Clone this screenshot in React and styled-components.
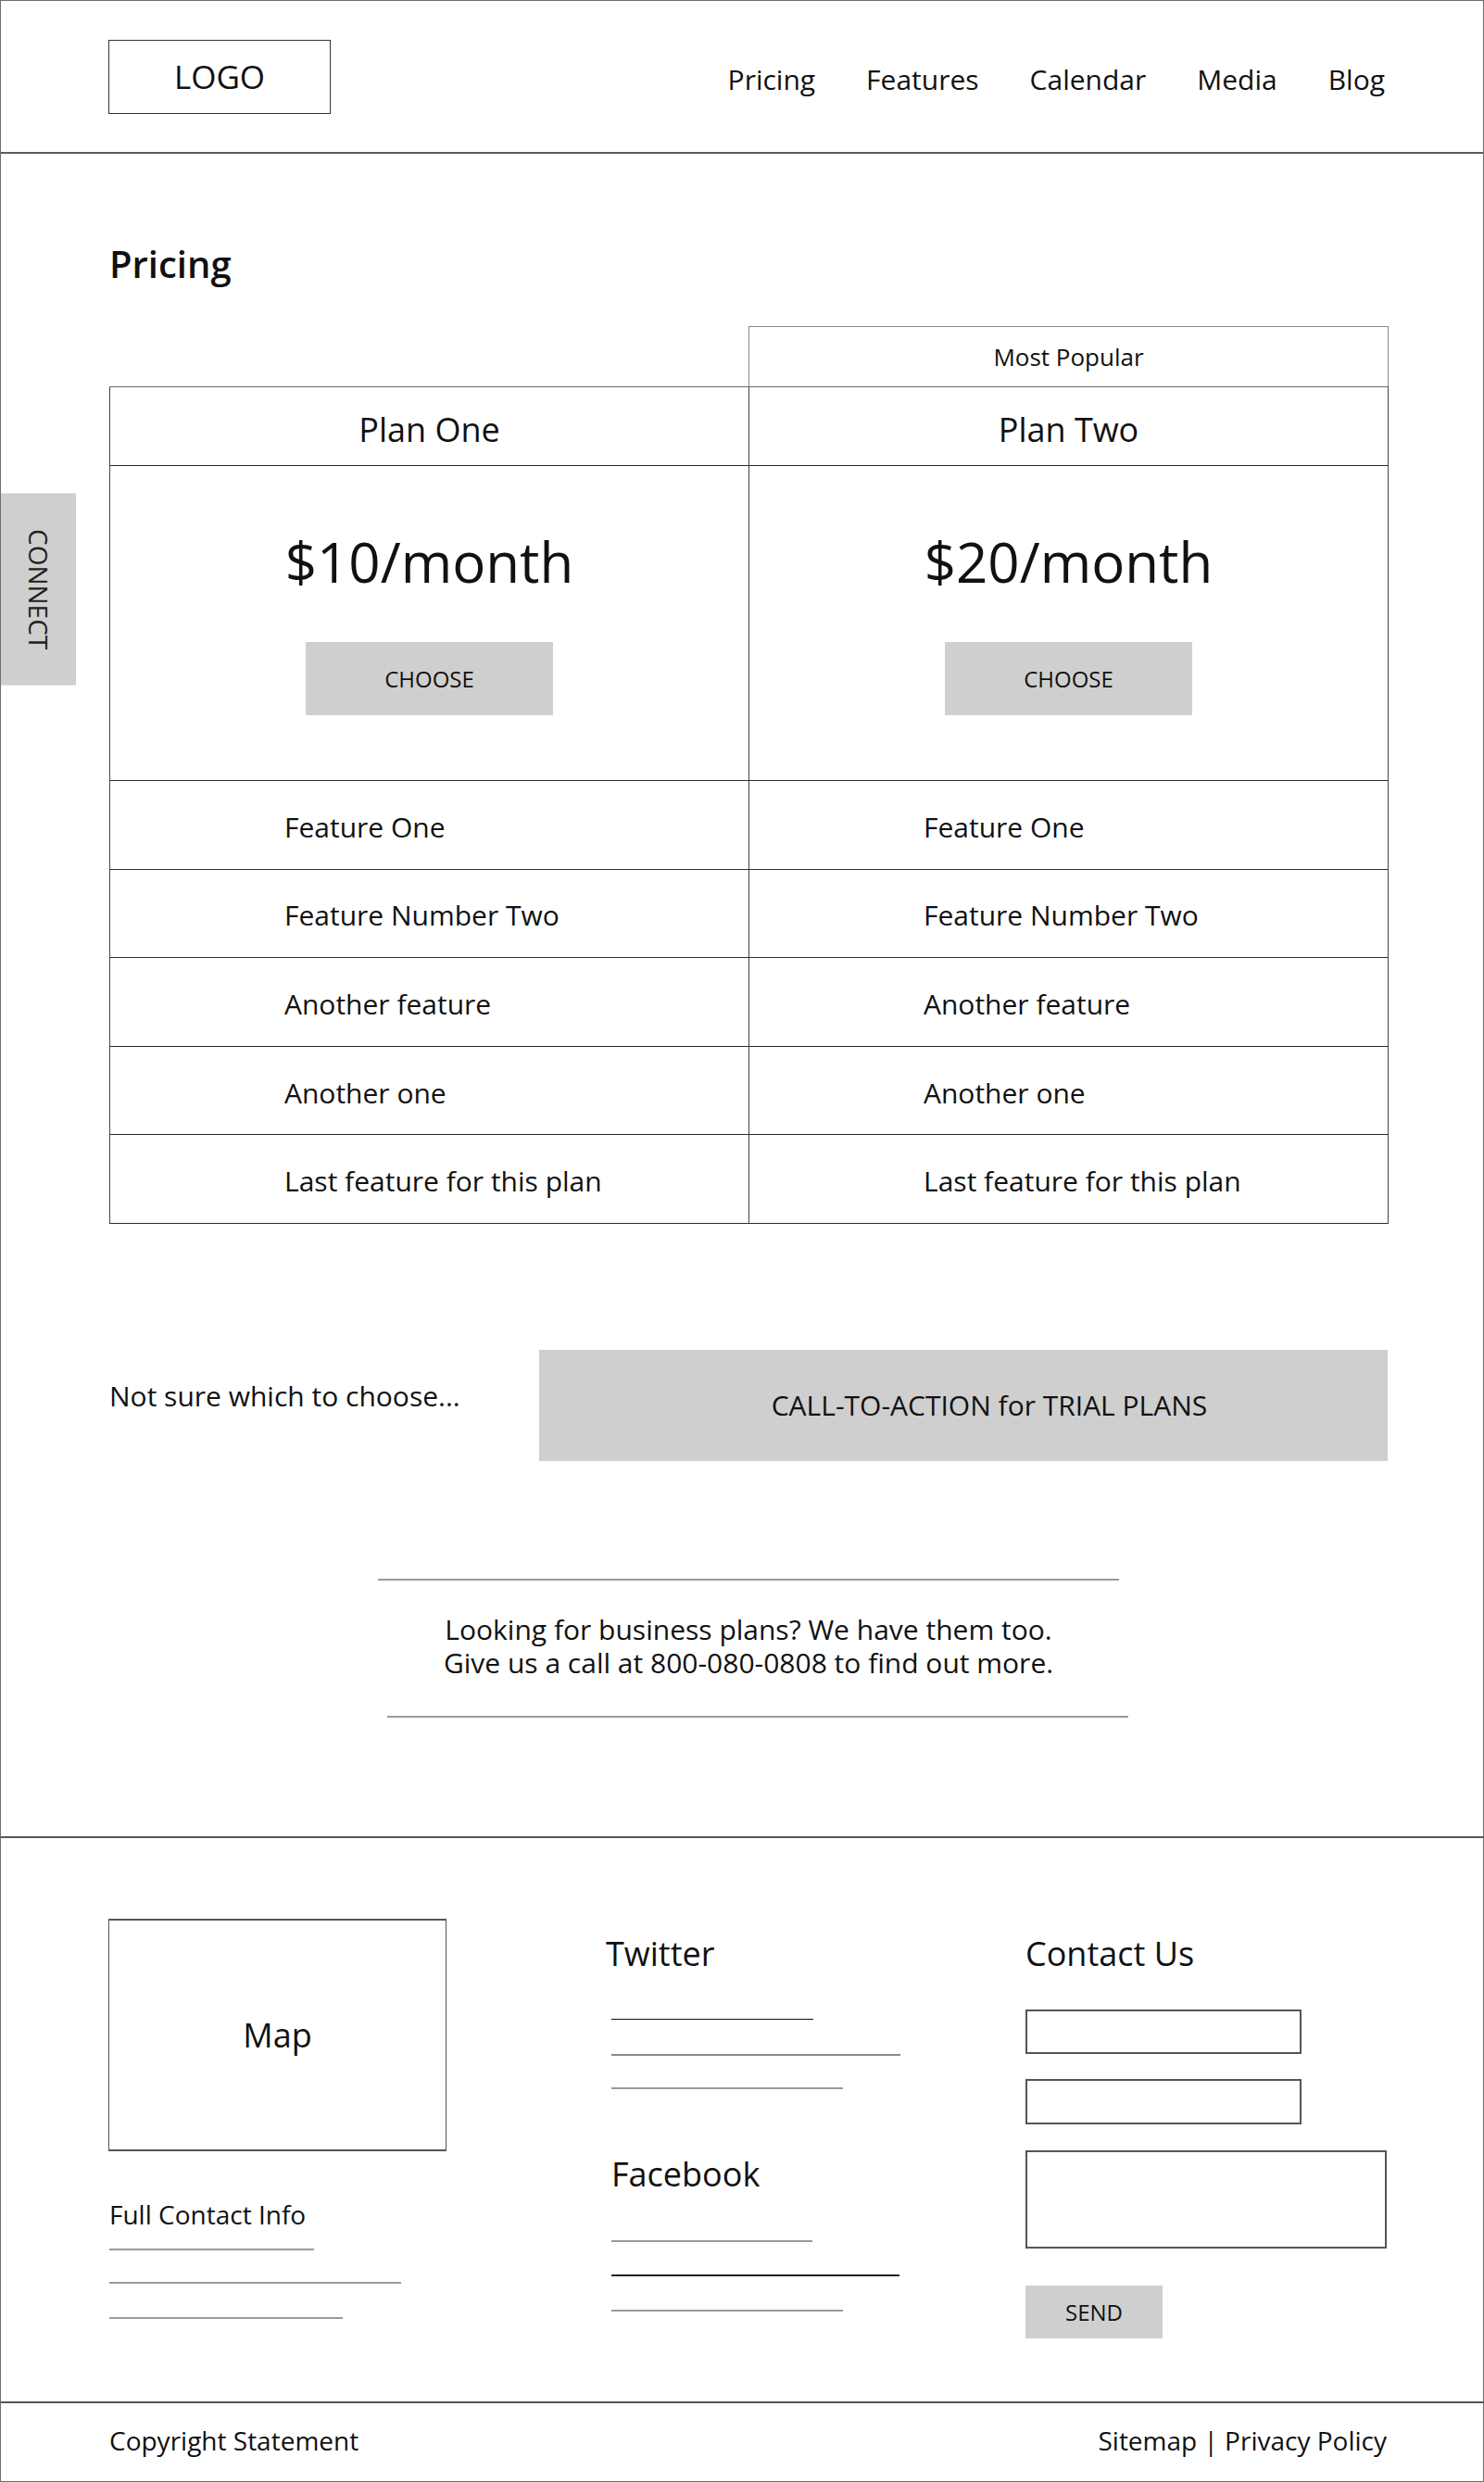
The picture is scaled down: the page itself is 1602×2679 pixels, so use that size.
import React from "react";
import styled, { createGlobalStyle } from "styled-components";

const GlobalStyle = createGlobalStyle`
  * {
    box-sizing: border-box;
  }
  body {
    margin: 0;
    background: #fff;
    font-family: "Open Sans", "Noto Sans", sans-serif;
    color: #111;
  }
`;

const Page = styled.div`
  position: relative;
  width: 1602px;
  border: 1px solid #6d6d6d;
  background: #fff;
`;

const Header = styled.header`
  height: 165px;
  display: flex;
  align-items: center;
  justify-content: space-between;
  padding: 0 106px 0 116px;
  border-bottom: 2px solid #5c5c5c;
`;

const Logo = styled.div`
  width: 240px;
  height: 80px;
  border: 1px solid #333;
  display: flex;
  align-items: center;
  justify-content: center;
  font-size: 35px;
`;

const Nav = styled.nav`
  display: flex;
  gap: 55px;
  margin-top: 5px;
`;

const NavItem = styled.a`
  font-size: 30px;
  color: #111;
  text-decoration: none;
  cursor: pointer;
`;

const ConnectTab = styled.div`
  position: absolute;
  left: 0;
  top: 531px;
  width: 81px;
  height: 208px;
  background: #cfcfcf;
  border-top: 1px solid #e2e2e2;
  border-bottom: 1px solid #e2e2e2;
  display: flex;
  align-items: center;
  justify-content: center;
`;

const TabLabel = styled.span`
  writing-mode: vertical-rl;
  font-size: 28px;
  line-height: 1;
  color: #222;
`;

const Main = styled.main`
  padding: 99px 103px 128px 117px;
`;

const Title = styled.h1`
  margin: 0;
  font-size: 40px;
  font-weight: 600;
  line-height: 1;
`;

const PricingTable = styled.div`
  margin-top: 47px;
`;

const PopularRow = styled.div`
  display: grid;
  grid-template-columns: 690px 691px;
`;

const PopularTag = styled.div`
  grid-column: 2;
  height: 65px;
  border: 1px solid #8a8a8a;
  border-bottom: none;
  display: flex;
  align-items: center;
  justify-content: center;
  font-size: 26px;
`;

const PlanGrid = styled.div`
  display: grid;
  grid-template-columns: 690px 690px;
  width: 1381px;
  border-top: 1px solid #6a6a6a;
  border-right: 1px solid #444;
`;

const Cell = styled.div`
  border-left: 1px solid #444;
  border-bottom: 1px solid #2a2a2a;
`;

const PlanName = styled(Cell)`
  height: 85px;
  display: flex;
  align-items: center;
  justify-content: center;
  padding-top: 6px;
  font-size: 36px;
`;

const PriceCell = styled(Cell)`
  height: 340px;
  display: flex;
  flex-direction: column;
  align-items: center;
  padding-top: 73px;
`;

const Price = styled.div`
  font-size: 60px;
  line-height: 1;
`;

const ChooseButton = styled.button`
  margin-top: 57px;
  width: 267px;
  height: 79px;
  border: none;
  background: #cfcfcf;
  font-family: inherit;
  font-size: 24px;
  color: #111;
  cursor: pointer;
`;

const FeatureCell = styled(Cell)`
  height: 95.6px;
  display: flex;
  align-items: center;
  padding: 4px 0 0 188px;
  font-size: 30px;
`;

const CtaRow = styled.div`
  margin-top: 136px;
  display: flex;
  height: 120px;
`;

const Unsure = styled.div`
  width: 464px;
  padding-top: 29px;
  font-size: 30px;
`;

const CtaButton = styled.div`
  flex: 1;
  background: #cfcfcf;
  display: flex;
  align-items: center;
  justify-content: center;
  padding-left: 56px;
  font-size: 30px;
`;

const Info = styled.div`
  width: 800px;
  margin: 127px auto 0;
  text-align: center;
`;

const InfoRule = styled.div`
  width: 800px;
  height: 2px;
  background: #9a9a9a;
  margin-left: ${(p) => p.$shift || 0}px;
`;

const InfoText = styled.p`
  margin: 35px 0 39px;
  font-size: 30px;
  line-height: 36px;
`;

const Footer = styled.footer`
  border-top: 2px solid #555;
  padding: 87px 104px 68px 116px;
  display: grid;
  grid-template-columns: 543px 447px 390px;
`;

const FooterCol = styled.div`
  display: flex;
  flex-direction: column;
  align-items: flex-start;
`;

const MapBox = styled.div`
  width: 365px;
  height: 251px;
  border: 1px solid #555;
  border-top-width: 2px;
  border-bottom-width: 2px;
  display: flex;
  align-items: center;
  justify-content: center;
  font-size: 36px;
`;

const ContactInfo = styled.div`
  margin: 49px 0 0 1px;
  font-size: 28px;
`;

const FooterHeading = styled.h3`
  margin: ${(p) => p.$mt}px 0 0 ${(p) => p.$ml || 0}px;
  font-size: 36px;
  font-weight: 400;
`;

const Line = styled.div`
  width: ${(p) => p.$w}px;
  height: ${(p) => p.$h || 2}px;
  background: ${(p) => p.$c || "#9a9a9a"};
  margin-top: ${(p) => p.$mt}px;
  margin-left: ${(p) => p.$ml || 0}px;
`;

const Field = styled.input`
  display: block;
  width: ${(p) => p.$w}px;
  height: ${(p) => p.$h}px;
  margin-top: ${(p) => p.$mt}px;
  padding: 0;
  border: 2px solid #555;
  background: #fff;
  outline: none;
`;

const Message = styled.textarea`
  display: block;
  width: 390px;
  height: 106px;
  margin-top: 28px;
  padding: 0;
  border: 2px solid #555;
  resize: none;
  outline: none;
`;

const SendButton = styled.button`
  margin-top: 40px;
  width: 148px;
  height: 57px;
  border: none;
  background: #cfcfcf;
  font-family: inherit;
  font-size: 24px;
  color: #111;
  cursor: pointer;
`;

const BottomBar = styled.div`
  height: 86px;
  border-top: 2px solid #555;
  display: flex;
  align-items: center;
  justify-content: space-between;
  padding: 0 104px 4px 117px;
  font-size: 28px;
`;

const navItems = ["Pricing", "Features", "Calendar", "Media", "Blog"];

const plans = [
  { name: "Plan One", price: "$10/month" },
  { name: "Plan Two", price: "$20/month" },
];

const features = [
  "Feature One",
  "Feature Number Two",
  "Another feature",
  "Another one",
  "Last feature for this plan",
];

const twitterLines = [
  { w: 218, h: 1, c: "#111", mt: 46 },
  { w: 312, h: 2, c: "#8a8a8a", mt: 37 },
  { w: 250, h: 2, c: "#9a9a9a", mt: 34 },
];

const facebookLines = [
  { w: 217, h: 2, c: "#9a9a9a", mt: 47 },
  { w: 311, h: 2, c: "#222", mt: 35 },
  { w: 250, h: 2, c: "#9a9a9a", mt: 36 },
];

const contactLines = [
  { w: 221, mt: 18 },
  { w: 315, mt: 34 },
  { w: 252, mt: 36 },
];

export default function App() {
  return (
    <>
      <GlobalStyle />
      <Page>
        <Header>
          <Logo>LOGO</Logo>
          <Nav>
            {navItems.map((item) => (
              <NavItem key={item}>{item}</NavItem>
            ))}
          </Nav>
        </Header>

        <ConnectTab>
          <TabLabel>CONNECT</TabLabel>
        </ConnectTab>

        <Main>
          <Title>Pricing</Title>

          <PricingTable>
            <PopularRow>
              <PopularTag>Most Popular</PopularTag>
            </PopularRow>
            <PlanGrid>
              {plans.map((p) => (
                <PlanName key={p.name}>{p.name}</PlanName>
              ))}
              {plans.map((p) => (
                <PriceCell key={p.price}>
                  <Price>{p.price}</Price>
                  <ChooseButton>CHOOSE</ChooseButton>
                </PriceCell>
              ))}
              {features.map((f) =>
                plans.map((p) => (
                  <FeatureCell key={f + p.name}>{f}</FeatureCell>
                ))
              )}
            </PlanGrid>
          </PricingTable>

          <CtaRow>
            <Unsure>Not sure which to choose...</Unsure>
            <CtaButton>CALL-TO-ACTION for TRIAL PLANS</CtaButton>
          </CtaRow>

          <Info>
            <InfoRule />
            <InfoText>
              Looking for business plans? We have them too.
              <br />
              Give us a call at 800-080-0808 to find out more.
            </InfoText>
            <InfoRule $shift={10} />
          </Info>
        </Main>

        <Footer>
          <FooterCol>
            <MapBox>Map</MapBox>
            <ContactInfo>Full Contact Info</ContactInfo>
            {contactLines.map((l, i) => (
              <Line key={i} $w={l.w} $mt={l.mt} $ml={1} />
            ))}
          </FooterCol>

          <FooterCol>
            <FooterHeading $mt={13} $ml={-6}>
              Twitter
            </FooterHeading>
            {twitterLines.map((l, i) => (
              <Line key={i} $w={l.w} $h={l.h} $c={l.c} $mt={l.mt} />
            ))}
            <FooterHeading $mt={67}>Facebook</FooterHeading>
            {facebookLines.map((l, i) => (
              <Line key={i} $w={l.w} $h={l.h} $c={l.c} $mt={l.mt} />
            ))}
          </FooterCol>

          <FooterCol>
            <FooterHeading $mt={13}>Contact Us</FooterHeading>
            <Field $w={298} $h={48} $mt={36} />
            <Field $w={298} $h={49} $mt={27} />
            <Message />
            <SendButton>SEND</SendButton>
          </FooterCol>
        </Footer>

        <BottomBar>
          <span>Copyright Statement</span>
          <span>Sitemap | Privacy Policy</span>
        </BottomBar>
      </Page>
    </>
  );
}
